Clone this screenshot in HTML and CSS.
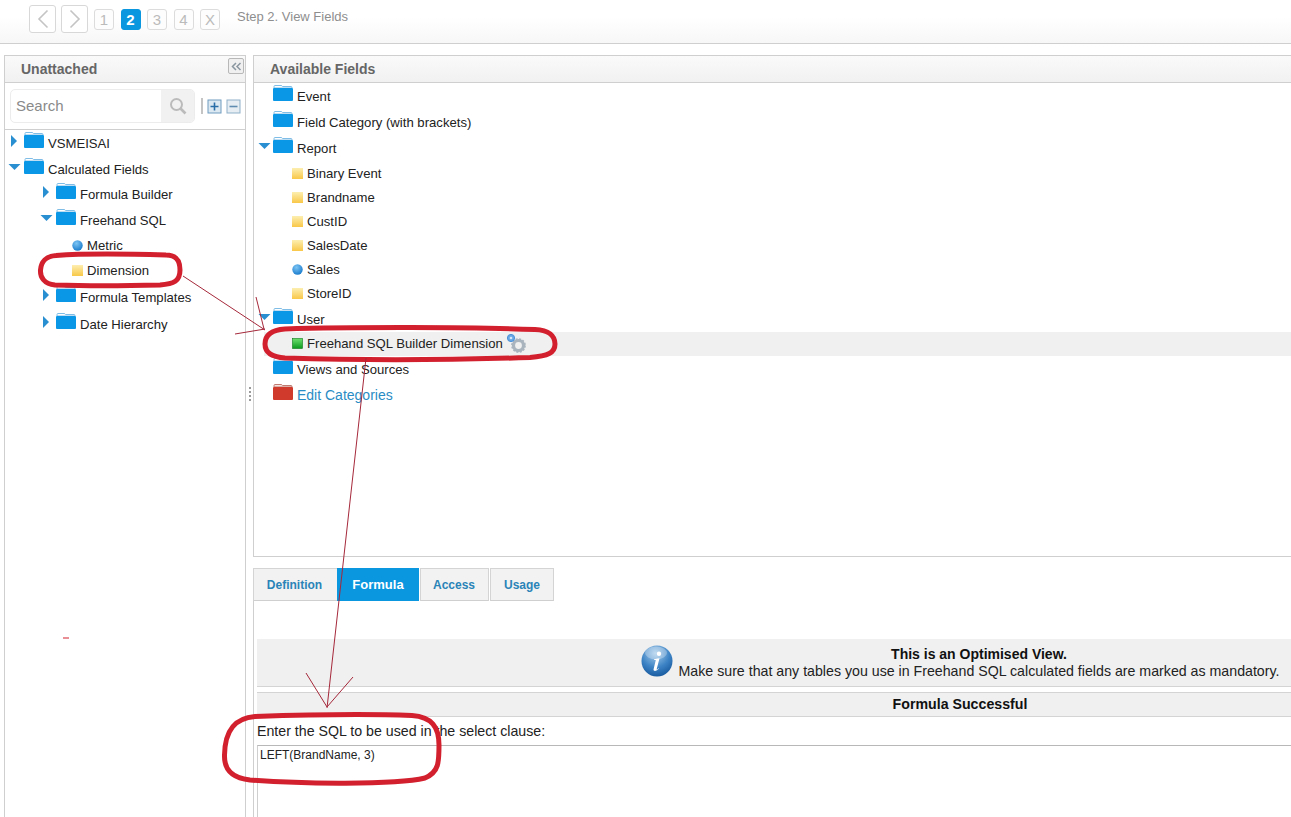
FILE: index.html
```html
<!DOCTYPE html>
<html lang="en">
<head>
<meta charset="utf-8">
<title>Step 2. View Fields</title>
<link rel="stylesheet" href="styles.css">
</head>
<body>
<svg class="defs" width="0" height="0" aria-hidden="true">
  <defs>
    <linearGradient id="gy" x1="0" y1="0" x2="0" y2="1"><stop offset="0" stop-color="#fdeeb0"/><stop offset="1" stop-color="#f8c848"/></linearGradient>
    <linearGradient id="gg" x1="0" y1="0" x2="0" y2="1"><stop offset="0" stop-color="#6fe06f"/><stop offset="1" stop-color="#0b9a1e"/></linearGradient>
    <radialGradient id="gb" cx=".4" cy=".3" r=".8"><stop offset="0" stop-color="#7cc4f4"/><stop offset="1" stop-color="#0f74c8"/></radialGradient>
    <radialGradient id="gi" cx=".45" cy=".25" r=".85"><stop offset="0" stop-color="#a8cdec"/><stop offset=".55" stop-color="#3b82c4"/><stop offset="1" stop-color="#0f4f94"/></radialGradient>
    <symbol id="folder" viewBox="0 0 20 16"><path d="M1 3V1.500Q1 .5 2 .5H8Q9 .5 9.500 1.500H18Q19 1.500 19 2.500V3Z" fill="#fff" stroke="#7fbce6" stroke-width="1"/><rect x="0" y="3" width="20" height="13" rx="1" fill="#0a97e6"/></symbol>
    <symbol id="folder-red" viewBox="0 0 20 16"><path d="M1 3V1.500Q1 .5 2 .5H8Q9 .5 9.500 1.500H18Q19 1.500 19 2.500V3Z" fill="#f6e4e0" stroke="#c07a70" stroke-width="1"/><rect x="0" y="3" width="20" height="13" rx="1" fill="#cf3a2c"/></symbol>
    <symbol id="sq" viewBox="0 0 11 11"><rect width="11" height="11" fill="url(#gy)"/></symbol>
    <symbol id="sq-green" viewBox="0 0 11 11"><rect x=".5" y=".5" width="10" height="10" fill="url(#gg)" stroke="#0b7a18" stroke-width=".6"/></symbol>
    <symbol id="dot" viewBox="0 0 11 11"><circle cx="5.500" cy="5.500" r="5.200" fill="url(#gb)"/></symbol>
    <symbol id="tri-r" viewBox="0 0 8 12"><path d="M1 0L7 6L1 12Z" fill="#2a8fd0"/></symbol>
    <symbol id="tri-d" viewBox="0 0 12 8"><path d="M0 1H12L6 7Z" fill="#2a8fd0"/></symbol>
  </defs>
</svg>

<header class="topbar">
  <button class="nav-btn" aria-label="Back"><svg width="12" height="20" viewBox="0 0 12 20"><path d="M10.500 1.500L2 10L10.500 18.500" fill="none" stroke="#c4c4c4" stroke-width="1.600"/></svg></button>
  <button class="nav-btn nav-next" aria-label="Next"><svg width="12" height="20" viewBox="0 0 12 20"><path d="M1.500 1.500L10 10L1.500 18.500" fill="none" stroke="#c4c4c4" stroke-width="1.600"/></svg></button>
  <div class="steps">
    <span class="step">1</span>
    <span class="step step-on">2</span>
    <span class="step">3</span>
    <span class="step">4</span>
    <span class="step">X</span>
  </div>
  <span class="step-title">Step 2. View Fields</span>
</header>

<div class="workspace">
  <aside class="side">
    <div class="panel-head side-head">
      <span>Unattached</span>
      <button class="collapse" aria-label="Collapse"><svg width="11" height="9" viewBox="0 0 11 9"><path d="M5 1L1.500 4.500L5 8M9.500 1L6 4.500L9.500 8" fill="none" stroke="#8a96a0" stroke-width="1.500"/></svg></button>
    </div>
    <div class="search-row">
      <div class="search">
        <span class="search-text">Search</span>
        <span class="search-btn"><svg width="18" height="18" viewBox="0 0 18 18"><circle cx="7.500" cy="7.500" r="5.500" fill="none" stroke="#bbb" stroke-width="2"/><path d="M11.500 11.500L16.500 16.500" stroke="#bbb" stroke-width="2.600"/></svg></span>
      </div>
      <span class="sep"></span>
      <svg class="tool" width="15" height="15" viewBox="0 0 15 15"><rect x="1" y="1" width="13" height="13" fill="#dce8f2" stroke="#6f9cc0"/><path d="M3.500 7.500H11.500M7.500 3.500V11.500" stroke="#2a6ea8" stroke-width="1.600"/></svg>
      <svg class="tool" width="15" height="15" viewBox="0 0 15 15"><rect x="1" y="1" width="13" height="13" fill="#e6eef4" stroke="#8fb0c8"/><path d="M3.500 7.500H11.500" stroke="#5f8cb0" stroke-width="1.600"/></svg>
    </div>
    <ul class="tree side-tree">
      <li class="row folder-row"><svg class="tri tri-right"><use href="#tri-r"/></svg><svg class="fld"><use href="#folder"/></svg><span>VSMEISAI</span></li>
      <li class="row folder-row gap-top row-short"><svg class="tri tri-down"><use href="#tri-d"/></svg><svg class="fld"><use href="#folder"/></svg><span>Calculated Fields</span></li>
      <li class="row folder-row in1"><svg class="tri tri-right"><use href="#tri-r"/></svg><svg class="fld"><use href="#folder"/></svg><span>Formula Builder</span></li>
      <li class="row folder-row in1"><svg class="tri tri-down"><use href="#tri-d"/></svg><svg class="fld"><use href="#folder"/></svg><span>Freehand SQL</span></li>
      <li class="row leaf-row leaf-tall in2"><svg class="leaf"><use href="#dot"/></svg><span>Metric</span></li>
      <li class="row leaf-row leaf-tall in2"><svg class="leaf"><use href="#sq"/></svg><span>Dimension</span></li>
      <li class="row folder-row in1 gap-top"><svg class="tri tri-right"><use href="#tri-r"/></svg><svg class="fld"><use href="#folder"/></svg><span>Formula Templates</span></li>
      <li class="row folder-row in1 gap-top"><svg class="tri tri-right"><use href="#tri-r"/></svg><svg class="fld"><use href="#folder"/></svg><span>Date Hierarchy</span></li>
    </ul>
  </aside>

  <div class="splitter"><i></i><i></i><i></i><i></i></div>

  <main class="main">
    <section class="fields">
      <div class="panel-head">Available Fields</div>
      <ul class="tree main-tree">
        <li class="row folder-row"><span class="tri-slot"></span><svg class="fld"><use href="#folder"/></svg><span>Event</span></li>
        <li class="row folder-row"><span class="tri-slot"></span><svg class="fld"><use href="#folder"/></svg><span>Field Category (with brackets)</span></li>
        <li class="row folder-row"><svg class="tri tri-down"><use href="#tri-d"/></svg><svg class="fld"><use href="#folder"/></svg><span>Report</span></li>
        <li class="row leaf-row leaf-main"><svg class="leaf"><use href="#sq"/></svg><span>Binary Event</span></li>
        <li class="row leaf-row leaf-main"><svg class="leaf"><use href="#sq"/></svg><span>Brandname</span></li>
        <li class="row leaf-row leaf-main"><svg class="leaf"><use href="#sq"/></svg><span>CustID</span></li>
        <li class="row leaf-row leaf-main"><svg class="leaf"><use href="#sq"/></svg><span>SalesDate</span></li>
        <li class="row leaf-row leaf-main"><svg class="leaf"><use href="#dot"/></svg><span>Sales</span></li>
        <li class="row leaf-row leaf-main"><svg class="leaf"><use href="#sq"/></svg><span>StoreID</span></li>
        <li class="row folder-row gap-top"><svg class="tri tri-down"><use href="#tri-d"/></svg><svg class="fld"><use href="#folder"/></svg><span>User</span></li>
        <li class="row leaf-row leaf-main selected"><svg class="leaf"><use href="#sq-green"/></svg><span>Freehand SQL Builder Dimension</span>
          <svg class="gears" width="20" height="20" viewBox="0 0 20 20"><circle cx="12.500" cy="12.500" r="5" fill="none" stroke="#a9b4be" stroke-width="3.200"/><circle cx="12.500" cy="12.500" r="6.600" fill="none" stroke="#a9b4be" stroke-width="1.600" stroke-dasharray="2 1.500"/><circle cx="5" cy="5" r="3.600" fill="#6aa8e4" stroke="#4a90d8" stroke-width="1"/><circle cx="5" cy="5" r="1.300" fill="#d8e8f6"/></svg></li>
        <li class="row folder-row"><span class="tri-slot"></span><svg class="fld"><use href="#folder"/></svg><span>Views and Sources</span></li>
        <li class="row folder-row"><span class="tri-slot"></span><svg class="fld"><use href="#folder-red"/></svg><a class="edit-link" href="#">Edit Categories</a></li>
      </ul>
    </section>

    <section class="details">
      <nav class="tabs">
        <a class="tab tab-def" href="#">Definition</a>
        <a class="tab tab-form tab-on" href="#">Formula</a>
        <a class="tab tab-acc" href="#">Access</a>
        <a class="tab tab-use" href="#">Usage</a>
      </nav>
      <div class="tab-body">
        <div class="notice">
          <svg class="info" width="32" height="32" viewBox="0 0 32 32"><circle cx="16" cy="16" r="15.500" fill="url(#gi)"/><ellipse cx="15" cy="8" rx="11" ry="6.500" fill="#fff" opacity=".28"/><path d="M16.500 13.500L13 14.200L13.200 15H14.800L12.500 24.600Q12.300 26 14 26Q16 26 18 23.600L17.400 23.200Q16.200 24.600 15.600 24.400L18.500 13.200ZM18 6.500A2.200 2.200 0 1 0 18 10.900A2.200 2.200 0 1 0 18 6.500Z" fill="#fff"/></svg>
          <div class="notice-text">
            <strong>This is an Optimised View.</strong>
            <span>Make sure that any tables you use in Freehand SQL calculated fields are marked as mandatory.</span>
          </div>
        </div>
        <div class="status">Formula Successful</div>
        <label class="sql-label">Enter the SQL to be used in the select clause:</label>
        <div class="sql-box">LEFT(BrandName, 3)</div>
      </div>
    </section>
  </main>
</div>

<svg class="marks" width="1291" height="817" viewBox="0 0 1291 817" aria-hidden="true">
  <g fill="none" stroke="#d3202e" stroke-width="5" stroke-linejoin="round">
    <path d="M56 255.500C90 253 130 254 166 255C176 255 180 260 180 270C180 281 174 284 160 285C120 286 85 286 55 285C44 284 40 277 40.500 270C41 262 46 256 56 255.500Z"/>
    <path d="M285 329C350 327 470 327 535 329.500C549 330 555 336 555 344C555 353 548 356 530 357.500C450 360 350 360 285 358C271 357 265 352 265 344C265 335 271 330 285 329Z"/>
    <path d="M255 716.500C300 715 370 714 412 715.500C432 717 439 727 439 745C439 762 439 772 425 778C395 785 300 784 250 780C232 778 224 770 224.500 755C225 730 235 718 255 716.500Z"/>
  </g>
  <g fill="none" stroke="#a5283a" stroke-width="1">
    <path d="M183 276L265 330"/>
    <path d="M256 297L264 329"/>
    <path d="M235 334L265 329"/>
    <path d="M366 358L327 708"/>
    <path d="M306 673L327 707L353 677"/>
  </g>
  <path d="M63 638H69" stroke="#d3202e" stroke-width="1"/>
</svg>
</body>
</html>
```
FILE: styles.css
```css
* { box-sizing: border-box; }
html, body { margin: 0; height: 100%; }
body {
  width: 1291px;
  height: 817px;
  overflow: hidden;
  background: #fff;
  color: #222;
  font-family: "Liberation Sans", Arial, sans-serif;
  font-size: 13px;
  position: relative;
}
ul { list-style: none; margin: 0; padding: 0; }
a { text-decoration: none; }
button { padding: 0; font: inherit; cursor: default; }
.defs { position: absolute; }

/* top bar */
.topbar {
  height: 44px;
  border-bottom: 1px solid #cfcfcf;
  background: linear-gradient(#fff 40%, #f7f7f7);
  display: flex;
  align-items: flex-start;
  padding: 5px 0 0 29px;
}
.nav-btn {
  width: 27px;
  height: 28px;
  background: #fff;
  border: 1px solid #d8d8d8;
  border-radius: 3px;
  display: flex;
  align-items: center;
  justify-content: center;
}
.nav-next { margin-left: 5px; }
.steps { display: flex; gap: 6.500px; margin: 4px 0 0 6px; }
.step {
  width: 20px;
  height: 21px;
  border: 1px solid #dcdcdc;
  border-radius: 3px;
  background: #fdfdfd;
  color: #bbb;
  font-size: 15px;
  line-height: 19px;
  text-align: center;
}
.step-on {
  background: #0a97e0;
  border-color: #0a97e0;
  color: #fff;
  font-weight: bold;
}
.step-title {
  margin: 5px 0 0 17px;
  font-size: 13px;
  line-height: 14px;
  color: #8e8e8e;
}

/* workspace */
.workspace {
  display: flex;
  align-items: flex-start;
  padding: 11px 0 0 4px;
}
.side {
  flex: none;
  width: 242px;
  height: 770px;
  border: 1px solid #cfcfcf;
  border-bottom: 0;
}
.panel-head {
  height: 27px;
  border-bottom: 1px solid #cfcfcf;
  background: linear-gradient(#fafafa, #f1f1f1);
  padding-left: 16px;
  font-size: 14px;
  font-weight: bold;
  line-height: 26px;
  color: #666;
}
.side-head { display: flex; justify-content: space-between; }
.collapse {
  width: 16px;
  height: 16px;
  margin: 2px 1px 0 0;
  border: 1px solid #b8b8b8;
  border-radius: 2px;
  background: #f0f0f0;
  display: flex;
  align-items: center;
  justify-content: center;
}
.search-row {
  height: 47px;
  border-bottom: 1px solid #cfcfcf;
  display: flex;
  align-items: center;
  padding-left: 5px;
}
.search {
  width: 185px;
  height: 34px;
  border: 1px solid #ececec;
  border-radius: 5px;
  display: flex;
  overflow: hidden;
}
.search-text {
  flex: 1;
  padding-left: 5px;
  font-size: 15px;
  line-height: 31px;
  color: #8a8a8a;
}
.search-btn {
  width: 33px;
  background: #f1f1f1;
  display: flex;
  align-items: center;
  justify-content: center;
}
.sep { width: 2px; height: 16px; margin: 0 4px 0 6px; background: #c4c4c4; }
.tool { flex: none; margin-right: 4px; }

/* trees */
.row {
  display: flex;
  align-items: center;
  white-space: nowrap;
  font-size: 13.130px;
  color: #222;
}
.folder-row { height: 26px; }
.row-short { height: 24px; }
.leaf-row { height: 24px; }
.leaf-tall { height: 25px; }
.gap-top { margin-top: 1px; }
.side-tree { padding: 0 0 0 3px; }
.main-tree { padding: 0 0 0 4px; }
.tri { flex: none; }
.tri-right { width: 8px; height: 12px; margin: -4px 6px 0 2px; }
.tri-down { width: 13px; height: 8px; margin: -4px 3px 0 0; }
.main-tree .tri-down { margin-right: 2px; }
.tri-slot { flex: none; width: 15px; }
.fld { flex: none; width: 20px; height: 16px; margin: -7px 4px 0 0; }
.in1 { padding-left: 32px; }
.in2 { padding-left: 64px; }
.leaf { flex: none; width: 11px; height: 11px; margin-right: 4px; }
.leaf-main { padding-left: 34px; }
.selected { background: #f0f0f0; margin-left: 6px; padding: 0 0 2px 28px; }
.gears { margin-left: 3px; }
.edit-link { font-size: 14px; color: #2a8cc4; }

/* splitter */
.splitter {
  flex: none;
  width: 7px;
  height: 770px;
  display: flex;
  flex-direction: column;
  justify-content: center;
  align-items: center;
  gap: 2px;
  padding-bottom: 92px;
}
.splitter i { width: 2px; height: 2px; background: #9a9a9a; }

/* main */
.main { flex: none; width: 1410px; }
.fields {
  height: 502px;
  border: 1px solid #cfcfcf;
}
.details { padding-top: 11px; }
.tabs { display: flex; height: 33px; position: relative; }
.tab {
  height: 33px;
  border: 1px solid #d4d4d4;
  border-bottom-color: #cfcfcf;
  background: #f2f2f2;
  color: #2a84b8;
  font-size: 12px;
  font-weight: bold;
  line-height: 32px;
  text-align: center;
}
.tab-def { width: 84px; border-right: 0; padding-right: 2px; }
.tab-form { width: 82px; }
.tab-acc { width: 69px; margin-left: 1px; padding-right: 1px; }
.tab-use { width: 64px; margin-left: 1px; }
.tab-on { background: #0a97e0; border-color: #0a97e0; color: #fff; font-size: 13px; }
.tab-body {
  height: 217px;
  border-left: 1px solid #cfcfcf;
  padding: 38px 0 0 3px;
}
.notice {
  height: 48px;
  background: #f0f0f0;
  border-bottom: 1px solid #d4d4d4;
  display: flex;
  justify-content: center;
  align-items: center;
  gap: 6px;
  font-size: 14.200px;
}
.info { flex: none; margin-top: -4px; }
.notice-text { display: flex; flex-direction: column; align-items: center; line-height: 17px; color: #222; }
.notice-text strong { color: #111; font-size: 14px; }
.status {
  height: 25px;
  margin-top: 5px;
  background: #f0f0f0;
  border-top: 1px solid #d4d4d4;
  border-bottom: 1px solid #d4d4d4;
  text-align: center;
  font-size: 14.200px;
  font-weight: bold;
  line-height: 23px;
  color: #111;
}
.sql-label {
  display: block;
  height: 28px;
  font-size: 14.200px;
  line-height: 29px;
  color: #222;
}
.sql-box {
  height: 90px;
  border-top: 1px solid #b8b8b8;
  border-left: 1px solid #cfcfcf;
  padding: 2px 0 0 2px;
  font-size: 12px;
  line-height: 14px;
  color: #222;
}

/* hand-drawn annotations */
.marks { position: absolute; left: 0; top: 0; pointer-events: none; }
```
